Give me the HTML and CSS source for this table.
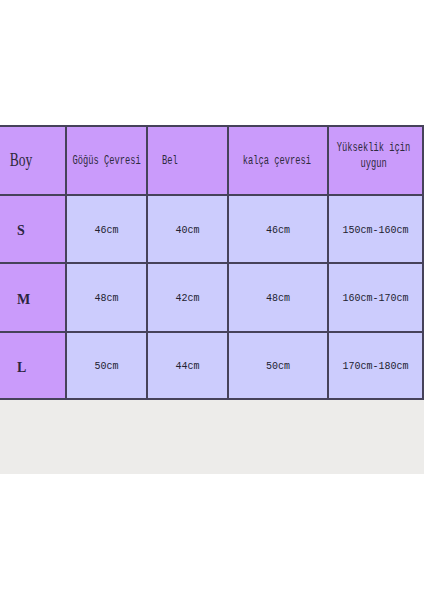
FILE: index.html
```html
<!DOCTYPE html>
<html>
<head>
<meta charset="utf-8">
<link rel="stylesheet" href="styles.css">
</head>
<body>
<div class="top-space"></div>
<div class="table">
  <div class="cell head first"><span class="hl big">Boy</span></div>
  <div class="cell head left"><span class="hl">Göğüs Çevresi</span></div>
  <div class="cell head left bel"><span class="hl">Bel</span></div>
  <div class="cell head"><span class="hl">kalça çevresi</span></div>
  <div class="cell head"><span class="hl two">Yükseklik için<br>uygun</span></div>

  <div class="cell head size">S</div>
  <div class="cell data">46cm</div>
  <div class="cell data">40cm</div>
  <div class="cell data">46cm</div>
  <div class="cell data">150cm-160cm</div>

  <div class="cell head size">M</div>
  <div class="cell data">48cm</div>
  <div class="cell data">42cm</div>
  <div class="cell data">48cm</div>
  <div class="cell data">160cm-170cm</div>

  <div class="cell head size">L</div>
  <div class="cell data">50cm</div>
  <div class="cell data">44cm</div>
  <div class="cell data">50cm</div>
  <div class="cell data">170cm-180cm</div>
</div>
<div class="gray-band"></div>
</body>
</html>
```
FILE: styles.css
```css
html, body {
  margin: 0;
  padding: 0;
  background: #ffffff;
}
.top-space {
  height: 125px;
}
.table {
  display: grid;
  grid-template-columns: 65px 79px 79px 98px 93px;
  grid-template-rows: 67px 66px 67px 65px;
  gap: 2px;
  padding: 2px 2px 2px 0;
  background: #46425a;
  width: 422px;
}
.cell {
  display: flex;
  align-items: center;
  justify-content: center;
  color: #333;
}
.head {
  background: #ca9bfb;
}
.data {
  background: #ccccfd;
  font-family: "Liberation Mono", monospace;
  font-size: 10px;
  color: #222230;
  padding-top: 2px;
}
.first {
  justify-content: flex-start;
  padding-left: 6px;
}
.left {
  justify-content: flex-start;
}
.hl {
  display: inline-block;
  font-family: "Liberation Mono", monospace;
  font-size: 12.5px;
  color: #2e2a3c;
  transform: scaleX(0.7);
  transform-origin: left center;
  white-space: nowrap;
  padding-left: 8px;
}
.bel .hl {
  padding-left: 20px;
}
.head .two {
  text-align: center;
  line-height: 16px;
  transform-origin: center center;
  padding-left: 0;
  margin-top: -10px;
  margin-left: -4px;
}
.head:nth-child(4) .hl {
  transform-origin: center center;
  padding-left: 0;
  margin-left: -3px;
}
.big {
  font-family: "Liberation Serif", serif;
  font-size: 18px;
  transform: scaleX(0.75);
  padding-left: 5px;
}
.size {
  justify-content: flex-start;
  padding-left: 17px;
  font-family: "Liberation Serif", serif;
  font-weight: bold;
  font-size: 14px;
  color: #2a2440;
  padding-top: 4px;
}
.gray-band {
  height: 74px;
  background: #edecea;
}
```
